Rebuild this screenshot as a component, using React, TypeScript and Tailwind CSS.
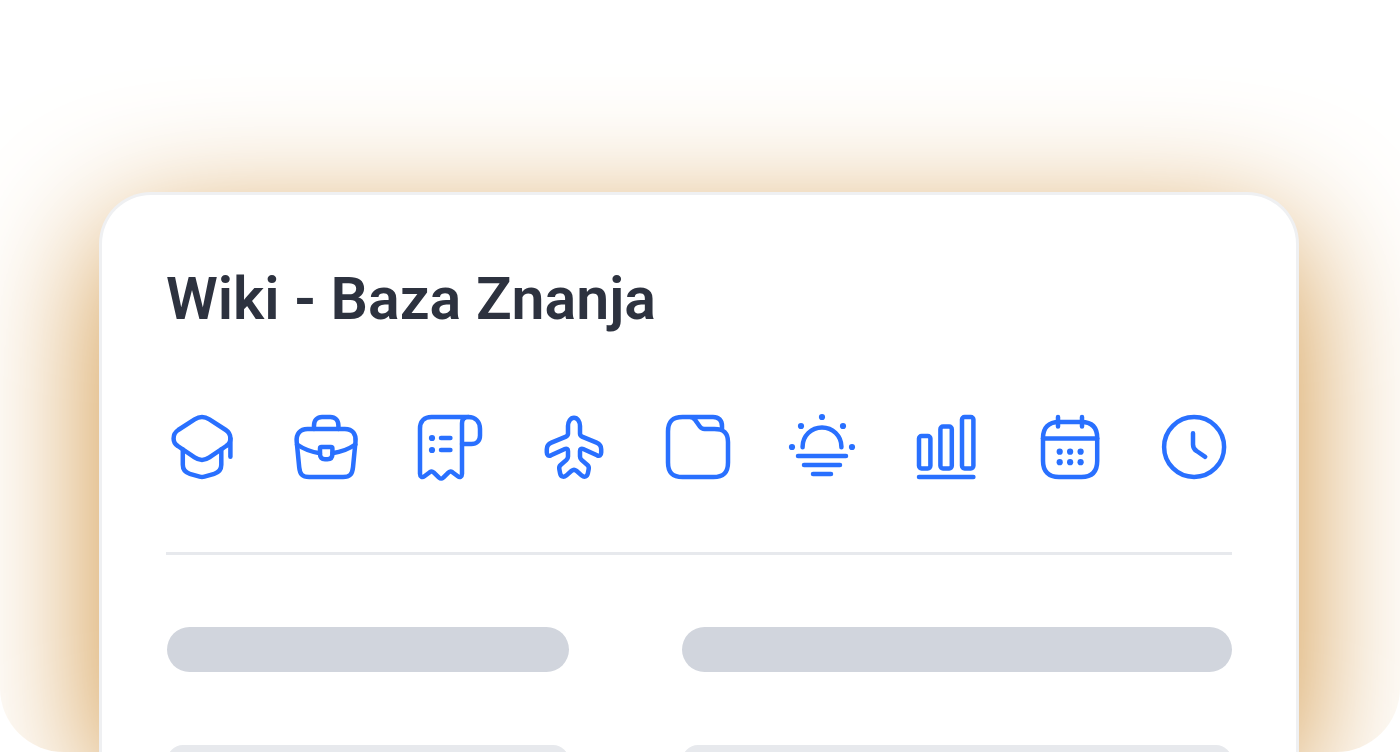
import type { ReactNode } from "react";

const icons: { name: string; art: ReactNode }[] = [
  {
    name: "Education",
    art: (
      <>
        <path d="M12.2 19L28.6 8.4C33.4 5.3 38.6 5.3 43.4 8.4L59.8 19C62.8 21 64.4 24 64.4 27.4C64.4 30.8 63 33.2 60.2 35L43.4 46.4C38.6 49.7 33.4 49.7 28.6 46.4L11.8 35C9 33.2 7.6 30.8 7.6 27.4C7.6 24 9.2 21 12.2 19Z" />
        <path d="M16.8 38.5V53.8C16.8 58.4 19.8 61.6 23.8 62.8L33.6 65.6C35.2 66.1 36.8 66.1 38.4 65.6L48.2 62.8C52.2 61.6 55.3 58.4 55.3 53.8V38.5" />
        <path d="M64.4 27.4V45.8" />
      </>
    ),
  },
  {
    name: "Business",
    art: (
      <>
        <path d="M24 18V14.5C24 9.3 27.3 6 32 6H40.4C45.1 6 48.4 9.3 48.4 14.5V18" />
        <path d="M17.5 18H54.9C62.5 18 66.2 23 65.5 30.6L63 56.2C62.3 63.2 60 66 53 66H19.2C12.2 66 9.9 63.2 9.2 56.2L6.7 30.6C6 23 9.9 18 17.5 18Z" />
        <path d="M7 33.5C13.5 38 21.5 41 30 42.2M65.4 33.5C59 38 50.8 41 42.4 42.2" />
        <path d="M31.4 36H41C42 36 42.4 36.4 42.4 37.4V43C42.4 46.6 40.8 48.2 37.4 48.2H35C31.6 48.2 30 46.6 30 43V37.4C30 36.4 30.4 36 31.4 36Z" />
      </>
    ),
  },
  {
    name: "Receipts",
    art: (
      <>
        <path d="M54.2 6H17.5C10.2 6 6 10.4 6 17.6V62.8C6 65.7 8.2 66.8 10.4 65.2L15.8 61.2C17.1 60.3 18.5 60.4 19.6 61.4L25 66.6C26.4 67.8 27.9 67.8 29.3 66.6L34.6 61.4C35.7 60.4 37.1 60.3 38.4 61.2L43.8 65.2C45.9 66.8 48 65.7 48 62.8V12.2C48 8.5 50.5 6 54.2 6Z" />
        <path d="M54.2 6C61.4 6 66 10.7 66 18V24.4C66 29.8 62.8 33 57.4 33H48" />
        <path d="M27 27H36.4M27 39H36.4" />
        <g fill="currentColor" stroke="none">
          <circle cx="18" cy="27" r="3.1" />
          <circle cx="18" cy="39" r="3.1" />
        </g>
      </>
    ),
  },
  {
    name: "Travel",
    art: (
      <path d="M30 15C30 10.8 32.5 6.8 36 6.8C39.5 6.8 42 10.8 42 15V22.6C42 24.4 42.6 25 44 25.6L58.6 31.6C61.8 32.9 63.2 35 63.2 38.2V41.4C63.2 44.3 61.6 45.3 59 44.3L45.2 38C43.4 37.2 42 38 42 40V45.6C42 47 42.5 48 43.5 48.9L49.4 54C50.7 55.2 51 56.4 50.7 58L49.9 62.2C49.2 65.7 46.4 66.7 43.8 64.6L38.4 59.8C36.7 58.4 35.3 58.4 33.6 59.8L28.2 64.6C25.6 66.7 22.8 65.7 22.1 62.2L21.3 58C21 56.4 21.3 55.2 22.6 54L28.5 48.9C29.5 48 30 47 30 45.6V40C30 38 28.6 37.2 26.8 38L13 44.3C10.4 45.3 8.8 44.3 8.8 41.4V38.2C8.8 35 10.2 32.9 13.4 31.6L28 25.6C29.4 25 30 24.4 30 22.6V15Z" />
    ),
  },
  {
    name: "Files",
    art: (
      <path d="M60 19V15.2C60 9.4 56.8 6 51 6H20.6C10.4 6 6 10.4 6 20.6V51.4C6 61.6 10.4 66 20.6 66H51.4C61.6 66 66 61.6 66 51.4V31C66 21.8 61.6 18 52.4 18H42.6C40.3 18 39.2 17.4 37.8 15.5L33.2 9C31.8 7 30 6 27.6 6" />
    ),
  },
  {
    name: "Vacation",
    art: (
      <>
        <path d="M16.6 36.2V35.6A19.4 19.2 0 0 1 55.4 35.6V36.2" />
        <path d="M12 45H60M18 54H54M27 63H45" />
        <g fill="currentColor" stroke="none">
          <circle cx="36" cy="6" r="3.1" />
          <circle cx="15" cy="15" r="3.1" />
          <circle cx="57" cy="15" r="3.1" />
          <circle cx="6" cy="36" r="3.1" />
          <circle cx="66" cy="36" r="3.1" />
        </g>
      </>
    ),
  },
  {
    name: "Reports",
    art: (
      <>
        <rect x="9" y="25" width="11.4" height="32.4" rx="2.6" />
        <rect x="30.4" y="15.6" width="11.4" height="41.8" rx="2.6" />
        <rect x="52" y="6" width="11.4" height="51.4" rx="2.6" />
        <path d="M9 66H63.4" />
      </>
    ),
  },
  {
    name: "Calendar",
    art: (
      <>
        <path d="M25 11H47.4C57.8 11 63.2 16.6 63.2 27V50C63.2 60.4 57.8 66 47.4 66H25C14.6 66 9 60.4 9 50V27C9 16.6 14.6 11 25 11Z" />
        <path d="M9 27.4H63.2" />
        <path d="M24 6V15.4M48 6V15.4" />
        <g fill="currentColor" stroke="none">
          <circle cx="25.7" cy="40.7" r="3.1" />
          <circle cx="36.1" cy="40.7" r="3.1" />
          <circle cx="46.6" cy="40.7" r="3.1" />
          <circle cx="25.7" cy="51.2" r="3.1" />
          <circle cx="36.1" cy="51.2" r="3.1" />
          <circle cx="46.6" cy="51.2" r="3.1" />
        </g>
      </>
    ),
  },
  {
    name: "Time",
    art: (
      <>
        <circle cx="36.1" cy="36" r="30" />
        <path d="M35 22.2V33.4C35 36.6 36 38.4 38.6 40L47.2 45.8" />
      </>
    ),
  },
];

export default function App() {
  return (
    <main className="h-screen overflow-hidden rounded-b-[64px] bg-white pt-48 pr-[101px] pl-[99px]">
      <section className="h-full rounded-t-[52px] border-[3px] border-b-0 border-[#eff0f2] bg-white px-16 pt-[68px] shadow-[0_40px_140px_0_#cf8f37]">
        <h1 className="font-[Roboto,sans-serif] text-[59px] leading-[72px] font-semibold text-[#2d323f]">
          Wiki - Baza Znanja
        </h1>

        <div className="mt-[76px] flex max-w-[1064px] justify-between text-[#2970ff]">
          {icons.map((icon) => (
            <svg
              key={icon.name}
              className="size-[72px]"
              viewBox="0 0 72 72"
              fill="none"
              stroke="currentColor"
              strokeWidth={4.5}
              strokeLinecap="round"
              strokeLinejoin="round"
              role="img"
              aria-label={icon.name}
            >
              {icon.art}
            </svg>
          ))}
        </div>

        <hr className="mt-[69px] h-[3px] border-0 bg-[#e7e9ed]" />

        <div className="mt-[72px] grid grid-cols-[402fr_550fr] gap-x-[113px] gap-y-[73px] pl-px">
          <div className="h-[45px] rounded-full bg-[#d1d5dd]" />
          <div className="h-[45px] rounded-full bg-[#d1d5dd]" />
          <div className="h-8 rounded-full bg-[#e7e9ed]" />
          <div className="h-8 rounded-full bg-[#e7e9ed]" />
        </div>
      </section>
    </main>
  );
}
